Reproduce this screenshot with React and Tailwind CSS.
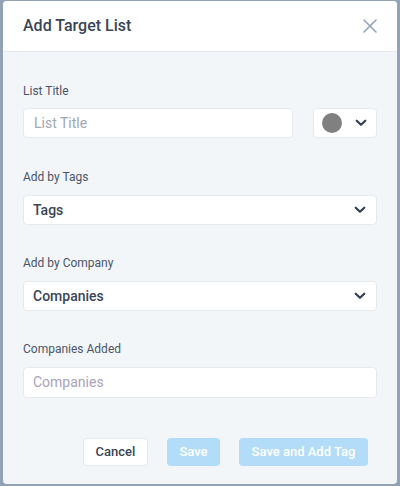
import React from 'react';

const Chevron = () => (
  <svg width="12" height="8" viewBox="0 0 12 8" fill="none">
    <path d="M1.7 1.7L6 5.8L10.3 1.7" stroke="#334155" strokeWidth="2.2" strokeLinecap="round" strokeLinejoin="round" />
  </svg>
);

const Label = ({ children }) => (
  <div className="text-[12px] leading-[16px] text-[#4a5568]">{children}</div>
);

const SelectBox = ({ text }) => (
  <div className="mt-[10px] h-[30px] w-full rounded-[4px] border border-[#e6eaef] bg-white flex items-center justify-between pl-[9px] pr-[10px]">
    <span className="text-[14px] font-medium text-[#3a4556]">{text}</span>
    <Chevron />
  </div>
);

export default function App() {
  return (
    <div
      className="w-[400px] h-[486px] bg-[#93a3b6] pt-[1px] px-[3px] pb-[2px]"
      style={{ fontFamily: 'Roboto, "Liberation Sans", sans-serif' }}
    >
      <div className="h-full w-full rounded-[4px] bg-[#f3f6f9] overflow-hidden flex flex-col">
        {/* header */}
        <div className="h-[51px] bg-white border-b border-[#e3e8ee] flex items-center justify-between pl-[20px] pr-[20px] shrink-0">
          <h2 className="text-[16px] font-medium text-[#3a4556] leading-none">Add Target List</h2>
          <svg width="14" height="14" viewBox="0 0 14 14" fill="none">
            <path d="M1 1L13 13M13 1L1 13" stroke="#94a3b8" strokeWidth="1.6" strokeLinecap="round" />
          </svg>
        </div>

        {/* body */}
        <div className="px-[20px] pt-[31px]">
          <Label>List Title</Label>
          <div className="mt-[9px] flex gap-[20px]">
            <div className="h-[30px] w-[270px] rounded-[4px] border border-[#e6eaef] bg-white flex items-center pl-[10px]">
              <span className="text-[14px] text-[#a0a8b3]">List Title</span>
            </div>
            <div className="h-[30px] w-[64px] rounded-[4px] border border-[#e6eaef] bg-white flex items-center justify-between pl-[8px] pr-[9px]">
              <div className="w-[20px] h-[20px] rounded-full bg-[#808080]" />
              <Chevron />
            </div>
          </div>

          <div className="mt-[31px]">
            <Label>Add by Tags</Label>
            <SelectBox text="Tags" />
          </div>

          <div className="mt-[30px]">
            <Label>Add by Company</Label>
            <SelectBox text="Companies" />
          </div>

          <div className="mt-[30px]">
            <Label>Companies Added</Label>
            <div className="mt-[10px] h-[31px] w-full rounded-[4px] border border-[#e6eaef] bg-white flex items-center pl-[9px]">
              <span className="text-[14px] text-[#a9a2b8]">Companies</span>
            </div>
          </div>

          <div className="mt-[40px] flex justify-end gap-[19px] pr-[9px]">
            <button className="h-[28px] w-[65px] rounded-[4px] border border-[#e2e8f0] bg-white text-[13px] font-medium text-[#3a4556]">
              Cancel
            </button>
            <button className="h-[28px] w-[53px] rounded-[4px] bg-[#b3dcf8] text-[13px] font-medium text-white">
              Save
            </button>
            <button className="h-[28px] w-[129px] rounded-[4px] bg-[#b3dcf8] text-[13px] font-medium text-white">
              Save and Add Tag
            </button>
          </div>
        </div>
      </div>
    </div>
  );
}
